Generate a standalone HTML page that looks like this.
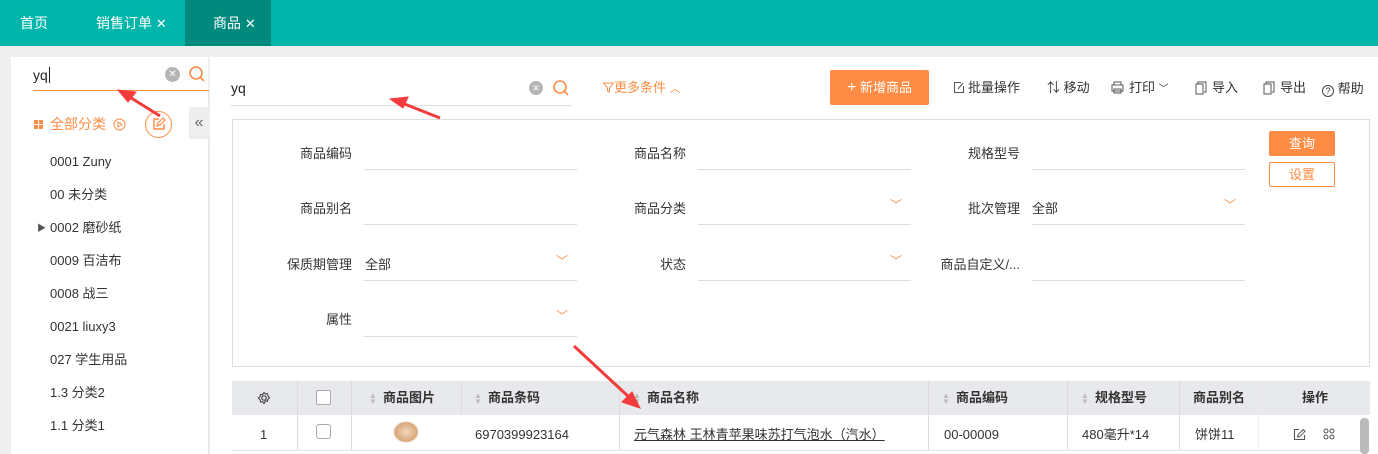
<!DOCTYPE html>
<html><head><meta charset="utf-8"><style>
*{box-sizing:border-box;margin:0;padding:0}
body{width:1378px;height:454px;overflow:hidden;background:#efefef;font-family:"Liberation Sans","Noto Sans CJK SC",sans-serif;font-size:13px;line-height:16px;color:#333;position:relative}
.a{position:absolute;line-height:16px}
.top{left:0;top:0;width:1378px;height:46px;background:#00b5a9}
.tab{top:15px;color:#fff;font-size:14px}
.lab{font-size:13px;color:#333;text-align:right;width:120px}
.line{height:1px;background:#ddd}
.arrow{color:#ff8c45;font-size:12px}
.th{top:390px;font-weight:bold;font-size:13px;color:#333}
.vl{top:381px;width:1px;height:69px;background:#dcdcdc}
.sort{display:inline-block;width:8px;vertical-align:middle;margin-right:6px}
.tree{left:50px;font-size:13px;color:#333}
</style></head><body>
<div class="a top"></div>
<div class="a tab" style="left:20px">首页</div>
<div class="a tab" style="left:96px">销售订单 <span style="font-size:13px">✕</span></div>
<div class="a" style="left:185px;top:0;width:86px;height:46px;background:#00897d"></div>
<div class="a tab" style="left:213px">商品 <span style="font-size:13px">✕</span></div>

<div class="a" style="left:11px;top:57px;width:197px;height:397px;background:#fff"></div>
<div class="a" style="left:33px;top:67px;font-size:14px;color:#222">yq<span style="border-left:1px solid #222;margin-left:1px"></span></div>
<div class="a" style="left:165px;top:67px;width:15px;height:15px;border-radius:50%;background:#b5b5b5;color:#fff;font-size:10px;line-height:15px;text-align:center">✕</div>
<svg class="a" style="left:188px;top:65px" width="18" height="18"><circle cx="8" cy="8" r="6" fill="none" stroke="#ff8c45" stroke-width="1.6"/><line x1="12.5" y1="12.5" x2="16" y2="16" stroke="#ff8c45" stroke-width="1.6"/></svg>
<div class="a" style="left:33px;top:90px;width:176px;height:1px;background:#ff8c45"></div>
<div class="a" style="left:208px;top:91px;width:1px;height:363px;background:#e5e5e5"></div>
<div class="a" style="left:189px;top:107px;width:20px;height:32px;background:#eee;color:#666;font-size:16px;line-height:32px;text-align:center">«</div>
<svg class="a" style="left:34px;top:120px" width="10" height="10"><rect x="0" y="0" width="4" height="4" fill="#ff8c45"/><rect x="5" y="0" width="4" height="4" fill="#ff8c45"/><rect x="0" y="5" width="4" height="4" fill="#ff8c45"/><rect x="5" y="5" width="4" height="4" fill="#ff8c45"/></svg>
<div class="a" style="left:50px;top:116px;color:#ff8c45;font-size:14px">全部分类</div>
<svg class="a" style="left:113px;top:118px" width="13" height="13"><circle cx="6.5" cy="6.5" r="5.5" fill="none" stroke="#ff8c45"/><path d="M5 4l4 2.5L5 9z" fill="none" stroke="#ff8c45"/></svg>
<div class="a" style="left:145px;top:111px;width:27px;height:27px;border:1px solid #ff8c45;border-radius:50%"></div>
<svg class="a" style="left:152px;top:117px" width="14" height="14"><path d="M7 2H2v10h10V7" fill="none" stroke="#ff8c45" stroke-width="1.4"/><path d="M5 9l1-3 5-5 2 2-5 5z" fill="none" stroke="#ff8c45" stroke-width="1.2"/></svg>
<div class="a tree" style="top:154px">0001 Zuny</div>
<div class="a tree" style="top:187px">00 未分类</div>
<div class="a" style="left:37px;top:220px;font-size:9px;color:#555">▶</div>
<div class="a tree" style="top:220px">0002 磨砂纸</div>
<div class="a tree" style="top:253px">0009 百洁布</div>
<div class="a tree" style="top:286px">0008 战三</div>
<div class="a tree" style="top:319px">0021 liuxy3</div>
<div class="a tree" style="top:352px">027 学生用品</div>
<div class="a tree" style="top:385px">1.3 分类2</div>
<div class="a tree" style="top:418px">1.1 分类1</div>

<div class="a" style="left:210px;top:57px;width:1168px;height:397px;background:#fff"></div>
<div class="a" style="left:231px;top:80px;font-size:14px;color:#222">yq</div>
<div class="a" style="left:529px;top:81px;width:14px;height:14px;border-radius:50%;background:#b5b5b5;color:#fff;font-size:9px;line-height:14px;text-align:center">✕</div>
<svg class="a" style="left:552px;top:79px" width="18" height="18"><circle cx="8" cy="8" r="6" fill="none" stroke="#ff8c45" stroke-width="1.6"/><line x1="12.5" y1="12.5" x2="16" y2="16" stroke="#ff8c45" stroke-width="1.6"/></svg>
<div class="a line" style="left:231px;top:105px;width:341px"></div>
<div class="a" style="left:603px;top:80px;color:#ff8c45;font-size:13px">
<svg width="11" height="11" style="vertical-align:-1px"><path d="M0.5 1h10l-4 5v4l-2-1V6z" fill="none" stroke="#ff8c45"/></svg>更多条件 <span style="font-size:11px">︿</span></div>
<div class="a" style="left:830px;top:70px;width:99px;height:35px;background:#ff8c45;border-radius:2px;color:#fff;font-size:13px;line-height:35px;text-align:center"><b style="font-size:16px;font-weight:normal">+</b> 新增商品</div>
<svg class="a" style="left:953px;top:81px" width="12" height="13"><path d="M8 1.5H1.5v10h9V5" fill="none" stroke="#555"/><path d="M5 8l5-6" stroke="#555"/></svg>
<div class="a" style="left:968px;top:80px">批量操作</div>
<div class="a" style="left:1047px;top:80px">⇅ 移动</div>
<svg class="a" style="left:1110px;top:81px" width="15" height="13"><path d="M4 4V1h7v3M2 4h11v6H2zM4 8h7v4H4z" fill="#fff" stroke="#555"/></svg>
<div class="a" style="left:1129px;top:80px">打印 <span style="font-size:10px">﹀</span></div>
<svg class="a" style="left:1195px;top:81px" width="12" height="14"><path d="M3 3V1h8v10H9M1 3h7v10H1z" fill="none" stroke="#555"/></svg>
<div class="a" style="left:1212px;top:80px">导入</div>
<svg class="a" style="left:1263px;top:81px" width="12" height="14"><path d="M3 3V1h8v10H9M1 3h7v10H1z" fill="none" stroke="#555"/></svg>
<div class="a" style="left:1280px;top:80px">导出</div>
<div class="a" style="left:1322px;top:81px"><span style="display:inline-block;width:12px;height:12px;border:1px solid #444;border-radius:50%;font-size:9px;line-height:11px;text-align:center;vertical-align:-1px">?</span> 帮助</div>

<div class="a" style="left:232px;top:119px;width:1138px;height:248px;border:1px solid #ddd"></div>
<div class="a" style="left:1269px;top:131px;width:66px;height:25px;background:#ff8c45;border-radius:2px;color:#fff;line-height:25px;text-align:center">查询</div>
<div class="a" style="left:1269px;top:162px;width:66px;height:25px;border:1px solid #ff8c45;border-radius:2px;color:#ff8c45;line-height:23px;text-align:center">设置</div>

<div class="a lab" style="left:232px;top:146px">商品编码</div>
<div class="a line" style="left:364px;top:169px;width:213px"></div>
<div class="a lab" style="left:566px;top:146px">商品名称</div>
<div class="a line" style="left:698px;top:169px;width:213px"></div>
<div class="a lab" style="left:900px;top:146px">规格型号</div>
<div class="a line" style="left:1032px;top:169px;width:213px"></div>

<div class="a lab" style="left:232px;top:201px">商品别名</div>
<div class="a line" style="left:364px;top:224px;width:213px"></div>
<div class="a lab" style="left:566px;top:201px">商品分类</div>
<div class="a line" style="left:698px;top:224px;width:213px"></div>
<div class="a arrow" style="left:890px;top:197px">﹀</div>
<div class="a lab" style="left:900px;top:201px">批次管理</div>
<div class="a" style="left:1032px;top:201px">全部</div>
<div class="a line" style="left:1032px;top:224px;width:213px"></div>
<div class="a arrow" style="left:1224px;top:197px">﹀</div>

<div class="a lab" style="left:232px;top:257px">保质期管理</div>
<div class="a" style="left:365px;top:257px">全部</div>
<div class="a line" style="left:364px;top:280px;width:213px"></div>
<div class="a arrow" style="left:556px;top:253px">﹀</div>
<div class="a lab" style="left:566px;top:257px">状态</div>
<div class="a line" style="left:698px;top:280px;width:213px"></div>
<div class="a arrow" style="left:890px;top:253px">﹀</div>
<div class="a lab" style="left:900px;top:257px">商品自定义/...</div>
<div class="a line" style="left:1032px;top:280px;width:213px"></div>

<div class="a lab" style="left:232px;top:312px">属性</div>
<div class="a line" style="left:364px;top:336px;width:213px"></div>
<div class="a arrow" style="left:556px;top:308px">﹀</div>

<div class="a" style="left:232px;top:381px;width:1138px;height:34px;background:#e8e9ec"></div>
<div class="a line" style="left:232px;top:450px;width:1138px;background:#e5e5e5"></div>
<div class="a vl" style="left:297px"></div><div class="a vl" style="left:351px"></div><div class="a vl" style="left:461px;height:34px"></div><div class="a vl" style="left:619px"></div><div class="a vl" style="left:928px"></div><div class="a vl" style="left:1067px"></div><div class="a vl" style="left:1179px"></div><div class="a vl" style="left:1258px;background:#eee"></div>
<svg class="a" style="left:257px;top:391px" width="14" height="14"><circle cx="7" cy="7" r="2.2" fill="none" stroke="#444" stroke-width="1.2"/><path d="M7 1.5l1.5 1.5 2-.3.3 2L12.5 7l-1.7 1.3-.3 2-2 -.3L7 12.5 5.5 10.7l-2 .3-.3-2L1.5 7l1.7-1.6.3-2 2 .3z" fill="none" stroke="#444" stroke-width="1.1"/></svg>
<div class="a" style="left:316px;top:390px;width:15px;height:15px;border:1px solid #aaa;border-radius:2px;background:#fff"></div>
<div class="a th" style="left:369px"><span class="sort" style="color:#bbb;font-size:8px;line-height:6px">▲<br>▼</span>商品图片</div>
<div class="a th" style="left:474px"><span class="sort" style="color:#bbb;font-size:8px;line-height:6px">▲<br>▼</span>商品条码</div>
<div class="a th" style="left:633px"><span class="sort" style="color:#bbb;font-size:8px;line-height:6px">▲<br>▼</span>商品名称</div>
<div class="a th" style="left:942px"><span class="sort" style="color:#bbb;font-size:8px;line-height:6px">▲<br>▼</span>商品编码</div>
<div class="a th" style="left:1081px"><span class="sort" style="color:#bbb;font-size:8px;line-height:6px">▲<br>▼</span>规格型号</div>
<div class="a th" style="left:1193px">商品别名</div>
<div class="a th" style="left:1302px">操作</div>

<div class="a" style="left:260px;top:427px">1</div>
<div class="a" style="left:316px;top:424px;width:15px;height:15px;border:1px solid #aaa;border-radius:3px"></div>
<div class="a" style="left:393px;top:421px;width:26px;height:22px;border-radius:40%;background:radial-gradient(#f2d7c0,#d9a77a 60%,#fff 70%)"></div>
<div class="a" style="left:475px;top:427px">6970399923164</div>
<div class="a" style="left:634px;top:427px;text-decoration:underline">元气森林 王林青苹果味苏打气泡水（汽水）</div>
<div class="a" style="left:944px;top:427px">00-00009</div>
<div class="a" style="left:1082px;top:427px">480毫升*14</div>
<div class="a" style="left:1195px;top:427px">饼饼11</div>
<svg class="a" style="left:1293px;top:428px" width="13" height="13"><path d="M6 1.5H1.5v10h10V7" fill="none" stroke="#555" stroke-width="1.1"/><path d="M4.5 9l.7-2.5 5-5 1.8 1.8-5 5z" fill="none" stroke="#555" stroke-width="1"/></svg>
<svg class="a" style="left:1323px;top:428px" width="12" height="12"><g fill="none" stroke="#555"><circle cx="3" cy="3" r="2"/><circle cx="9" cy="3" r="2"/><circle cx="3" cy="9" r="2"/><circle cx="9" cy="9" r="2"/></g></svg>
<div class="a" style="left:1360px;top:418px;width:9px;height:36px;border-radius:4px;background:#bbb"></div>

<svg class="a" style="left:0;top:0" width="1378" height="454">
<g stroke="#f23b3b" stroke-width="3" fill="#f23b3b">
<line x1="160" y1="116" x2="128" y2="96"/><polygon points="118,90 136,92 128,102" stroke-width="1"/>
<line x1="440" y1="118" x2="402" y2="103"/><polygon points="390,99 408,97 403,108" stroke-width="1"/>
<line x1="574" y1="346" x2="630" y2="398"/><polygon points="640,408 622,402 632,392" stroke-width="1"/>
</g></svg>
</body></html>
